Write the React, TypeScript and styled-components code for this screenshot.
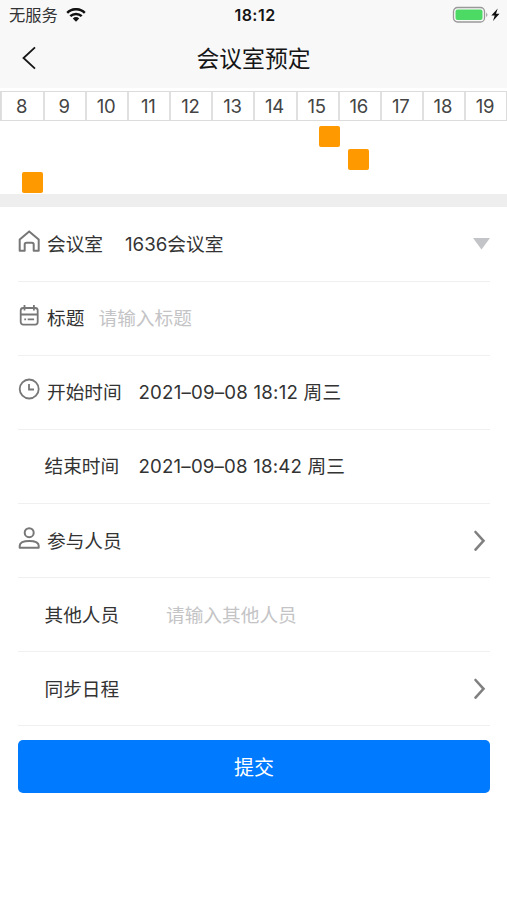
import React from "react";
import styled, { createGlobalStyle } from "styled-components";

const GlobalStyle = createGlobalStyle`
  * { box-sizing: border-box; }
  body { margin: 0; background: #fff; }
`;

const Page = styled.main`
  width: 507px;
  height: 900px;
  overflow: hidden;
  background: #fff;
  color: #333;
  font-family: Inter, "Noto Sans CJK SC", sans-serif;
  font-size: 18.7px;
`;

const Header = styled.header`
  height: 88px;
  background: #f8f8f8;
  color: #151515;
`;

const StatusBar = styled.div`
  display: grid;
  grid-template-columns: 1fr auto 1fr;
  align-items: center;
  height: 29px;
  padding: 0 6px 0 9px;
`;

const Carrier = styled.div`
  display: flex;
  align-items: center;
  gap: 8px;
  padding-top: 1px;
  font-size: 16.3px;
  line-height: 28px;
  color: #333;
`;

const Clock = styled.div`
  padding-top: 2px;
  font-size: 16px;
  font-weight: 600;
  line-height: 27px;
  letter-spacing: 0.45px;
`;

const Power = styled.div`
  display: flex;
  justify-content: flex-end;
`;

const NavBar = styled.div`
  display: grid;
  grid-template-columns: 60px 1fr 60px;
  align-items: center;
  height: 58px;
`;

const BackButton = styled.button`
  display: flex;
  padding: 0 0 0 21px;
  border: 0;
  background: none;
  color: inherit;
`;

const Title = styled.h1`
  margin: 0;
  padding-top: 1px;
  text-align: center;
  font-size: 22.8px;
  font-weight: 400;
  line-height: 57px;
`;

const Hours = styled.div`
  display: grid;
  grid-template-columns: repeat(12, 1fr);
  height: 30px;
  margin-top: 3px;
  border: 1px solid #dcdcdc;
`;

const Hour = styled.div`
  display: flex;
  align-items: center;
  justify-content: center;
  padding-right: 2px;
  border-left: 2px solid #e0e0e0;
  font-size: 18.5px;
  letter-spacing: -0.2px;
  color: #444;
  &:first-child { border-left-width: 1px; }
`;

const Lanes = styled.div`
  display: grid;
  grid-template-rows: repeat(3, 21px);
  row-gap: 2px;
  height: 73px;
  padding-top: 5px;
`;

const Booking = styled.div<{ $start: number }>`
  width: 21px;
  height: 21px;
  margin-left: ${(p) => p.$start}px;
  border-radius: 2px;
  background: #ff9900;
`;

const Divider = styled.div`
  height: 13px;
  background: #eee;
`;

const Form = styled.form`
  padding: 0 17px 0 18px;
`;

const Row = styled.div`
  display: flex;
  align-items: center;
  height: 74.15px;
  border-bottom: 1px solid #f0f0f0;
  line-height: 28px;
  &:first-child { height: 74.6px; }
`;

const IconSlot = styled.span`
  display: flex;
  flex: none;
  width: 29px;
  height: 28px;
  color: #777;
`;

const Label = styled.label<{ $width: number; $indent?: boolean }>`
  flex: none;
  width: ${(p) => p.$width}px;
  margin-left: ${(p) => (p.$indent ? 26.5 : 0)}px;
  padding-top: 2px;
  white-space: nowrap;
`;

const Value = styled.span<{ $tracking?: number }>`
  flex: 1;
  padding-top: 2px;
  white-space: nowrap;
  letter-spacing: ${(p) => p.$tracking ?? 0}px;
`;

const Placeholder = styled(Value)`
  color: #c4c4c6;
`;

const Submit = styled.button`
  display: block;
  width: 100%;
  height: 53px;
  margin-top: 14px;
  padding: 3px 0 0;
  border: 0;
  border-radius: 5px;
  background: #007aff;
  color: #fff;
  font: inherit;
  font-size: 20px;
  line-height: 50px;
`;

const stroke = { fill: "none", stroke: "currentColor", strokeWidth: 2 };

const HomeIcon = () => (
  <svg width="22" height="24" {...stroke} strokeLinejoin="round">
    <path d="M1.700 9.600 11.200 1.400l9.500 8.200v11.200h-5v-6.300q0-1.800-1.800-1.800H8.500q-1.800 0-1.800 1.800v6.300h-5z" />
  </svg>
);

const CalendarIcon = () => (
  <svg width="22" height="24" {...stroke} strokeWidth={1.800}>
    <rect x="2.700" y="4" width="17" height="16.600" rx="2.500" />
    <path d="M2.700 10.500h17M6.500 1v5.500M15.900 1v5.500M6.300 15.300h1.800M9.700 15.300h6.400" />
  </svg>
);

const ClockIcon = () => (
  <svg width="22" height="24" {...stroke} strokeWidth={1.800}>
    <circle cx="11.200" cy="11" r="9.500" />
    <path d="M11 6v5.500h5" />
  </svg>
);

const PersonIcon = () => (
  <svg width="22" height="24" {...stroke}>
    <circle cx="11.200" cy="5.700" r="4.500" />
    <path d="M1.700 20.700v-2c0-3 3.500-4.800 9.500-4.800s9.500 1.800 9.500 4.800v2z" strokeLinejoin="round" />
  </svg>
);

const Chevron = () => (
  <svg width="17" height="22" fill="none" stroke="#808080" strokeWidth="2.600">
    <path d="M2.500 2 10.500 10.800l-8 8.800" strokeLinecap="round" />
  </svg>
);

const hours = [8, 9, 10, 11, 12, 13, 14, 15, 16, 17, 18, 19];
const bookings = [319, 348, 22];

export default function App() {
  return (
    <Page>
      <GlobalStyle />
      <Header>
        <StatusBar>
          <Carrier>
            无服务
            <svg width="20" height="14" viewBox="0 0 20 14" fill="none" stroke="#111" strokeWidth="2.500">
              <path d="M1.200 4.800a12.600 12.600 0 0 1 17.600 0M4.300 8.200a8.200 8.200 0 0 1 11.400 0" />
              <path d="M6.800 10.600a4.700 4.700 0 0 1 6.400 0L10 13.800z" fill="#111" stroke="none" />
            </svg>
          </Carrier>
          <Clock>18:12</Clock>
          <Power>
            <svg width="49" height="17">
              <rect x="1.500" y="1.500" width="31" height="14.500" rx="4" fill="#f8f8f8" stroke="#999" strokeWidth="1.300" />
              <rect x="3.500" y="3.500" width="27" height="10.500" rx="2" fill="#4cd964" />
              <path d="M34.200 6.500q2.500 2.300 0 4.600z" fill="#999" />
              <path d="m45.700 2.500-6.400 7h3.400l-1.700 5.500 6.500-7.300h-3.500z" fill="#111" />
            </svg>
          </Power>
        </StatusBar>
        <NavBar>
          <BackButton aria-label="返回" type="button">
            <svg width="16" height="24" fill="none" stroke="currentColor" strokeWidth="1.800">
              <path d="M14 1.300 2.500 12 14 22.700" />
            </svg>
          </BackButton>
          <Title>会议室预定</Title>
        </NavBar>
      </Header>
      <Hours>
        {hours.map((h) => (
          <Hour key={h}>{h}</Hour>
        ))}
      </Hours>
      <Lanes>
        {bookings.map((start) => (
          <Booking key={start} $start={start} />
        ))}
      </Lanes>
      <Divider />
      <Form>
        <Row>
          <IconSlot><HomeIcon /></IconSlot>
          <Label $width={78}>会议室</Label>
          <Value>1636会议室</Value>
          <svg width="17" height="12"><path d="M0 0h17L8.500 11.500z" fill="#c3c4c7" /></svg>
        </Row>
        <Row>
          <IconSlot><CalendarIcon /></IconSlot>
          <Label $width={51.5}>标题</Label>
          <Placeholder>请输入标题</Placeholder>
        </Row>
        <Row>
          <IconSlot><ClockIcon /></IconSlot>
          <Label $width={91.5}>开始时间</Label>
          <Value $tracking={0.2}>2021–09–08 18:12 周三</Value>
        </Row>
        <Row>
          <Label $indent $width={94}>结束时间</Label>
          <Value $tracking={0.17}>2021–09–08 18:42 周三</Value>
        </Row>
        <Row>
          <IconSlot><PersonIcon /></IconSlot>
          <Label $width={92}>参与人员</Label>
          <Value />
          <Chevron />
        </Row>
        <Row>
          <Label $indent $width={121.5}>其他人员</Label>
          <Placeholder>请输入其他人员</Placeholder>
        </Row>
        <Row>
          <Label $indent $width={94.5}>同步日程</Label>
          <Value />
          <Chevron />
        </Row>
        <Submit type="button">提交</Submit>
      </Form>
    </Page>
  );
}
